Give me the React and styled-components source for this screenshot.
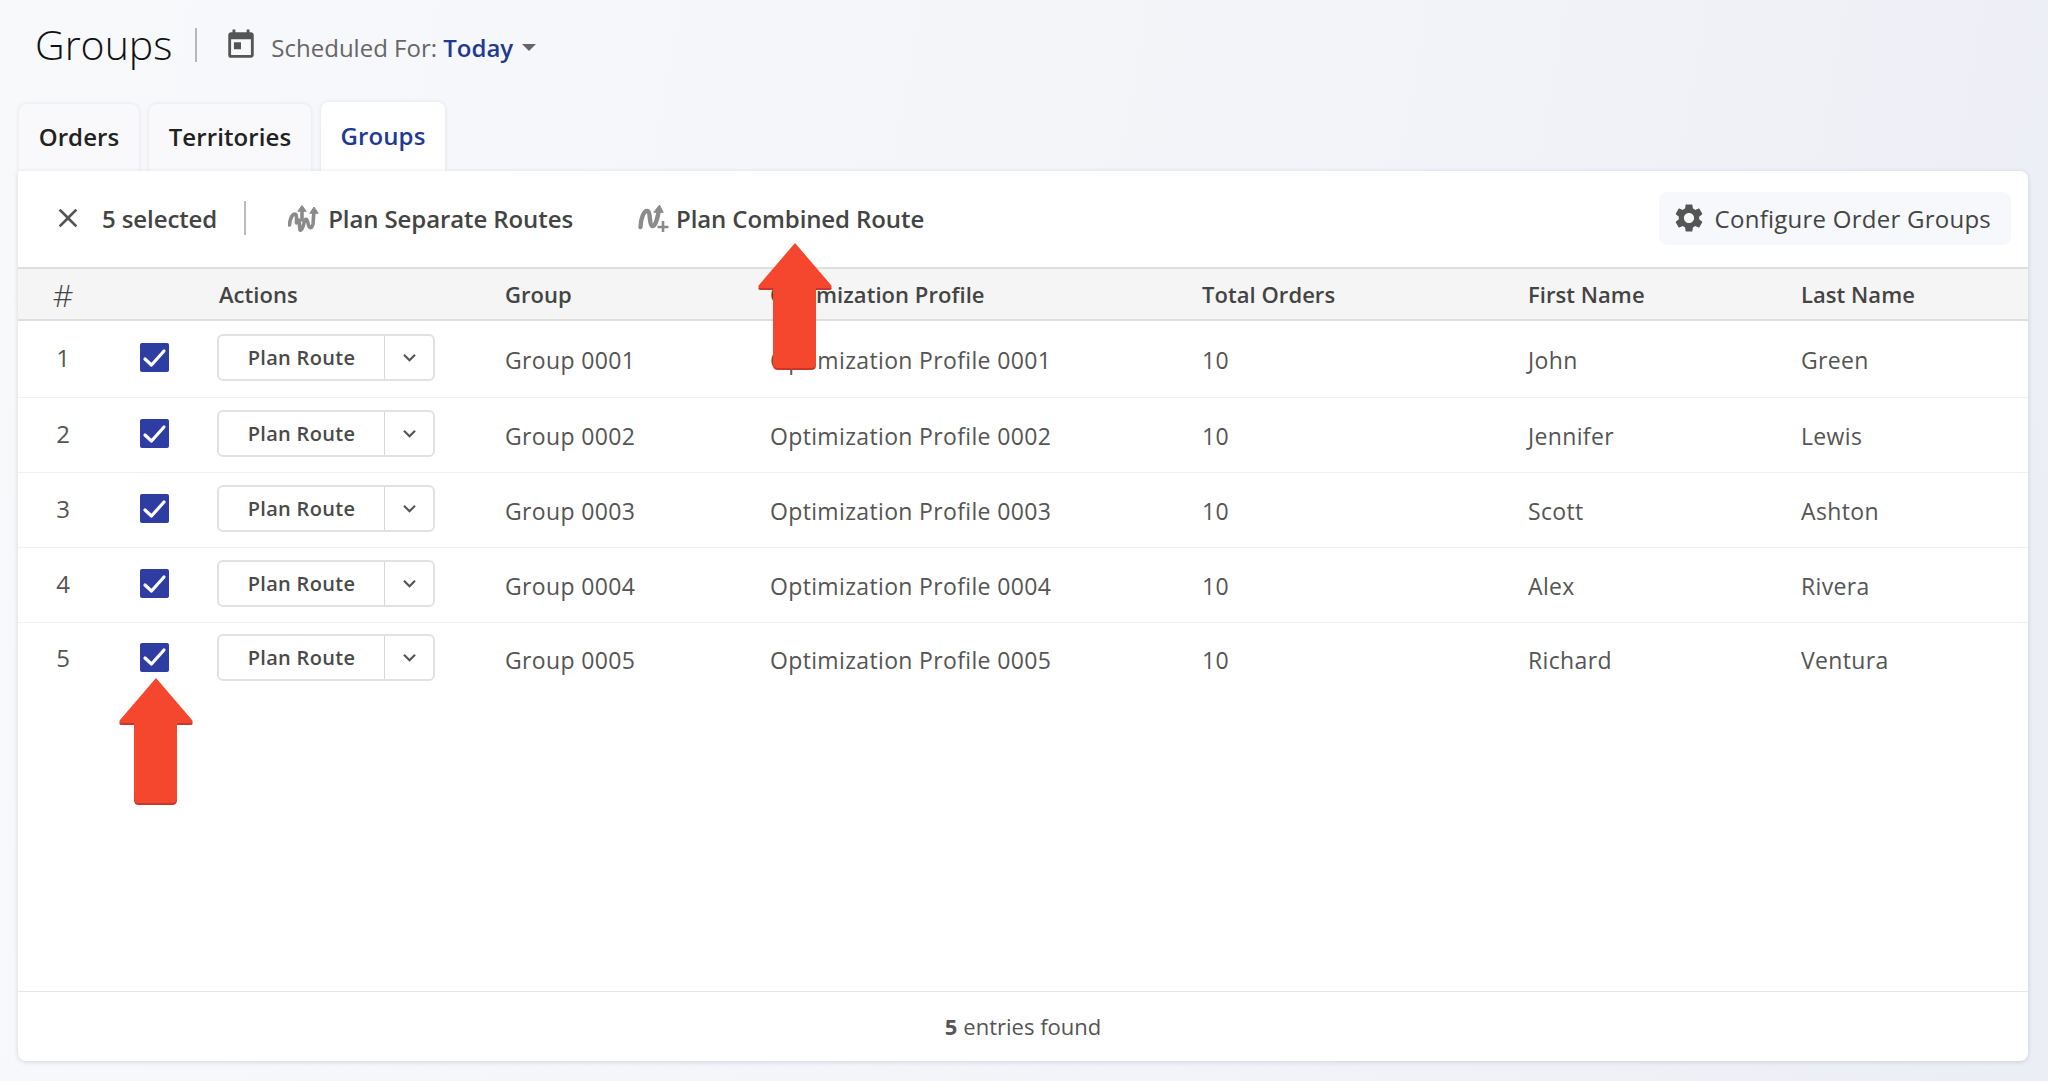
import React from "react";
import styled, { createGlobalStyle } from "styled-components";
import { MdToday, MdSettings, MdClose, MdExpandMore } from "react-icons/md";

const Global = createGlobalStyle`
  html, body {
    margin: 0;
    padding: 0;
    background: #f4f5f9;
  }
  * { box-sizing: border-box; }
`;

const Page = styled.div`
  position: relative;
  width: 2048px;
  height: 1081px;
  overflow: hidden;
  padding: 0 20px 20px 18px;
  font-family: "Open Sans", "Noto Sans", sans-serif;
  color: #555;
  background: linear-gradient(100deg, #f8f9fb 0%, #f4f5f9 50%, #eceef5 100%);
`;

const TitleBar = styled.div`
  display: flex;
  align-items: center;
  height: 90px;
  padding-left: 17px;
`;
const Title = styled.h1`
  margin: 0 0 3px;
  font-size: 41px;
  font-weight: 350;
  color: #111;
`;
const TitleDivider = styled.span`
  width: 2px;
  height: 34px;
  margin: 0 30px 0 23px;
  background: #b5b7bb;
`;
const CalendarIcon = styled(MdToday)`
  width: 34px;
  height: 34px;
  margin: 0 13px 0 -3px;
  color: #555;
`;
const Scheduled = styled.span`
  font-size: 24px;
  margin-top: 4px;
  color: #666;
`;
const Today = styled.span`
  color: #1f3a93;
  font-weight: 600;
`;
const Caret = styled.span`
  width: 0;
  height: 0;
  margin: 4px 0 0 9px;
  border-left: 7px solid transparent;
  border-right: 7px solid transparent;
  border-top: 7px solid #666;
`;

const Tabs = styled.div`
  display: flex;
  align-items: flex-end;
  gap: 10px;
  height: 81px;
  padding-left: 1px;
`;
const Tab = styled.div`
  display: flex;
  align-items: center;
  justify-content: center;
  width: ${(p) => p.$w}px;
  height: ${(p) => (p.$active ? 69 : 67)}px;
  padding-bottom: 2px;
  border-radius: 8px 8px 0 0;
  font-size: 24px;
  font-weight: 550;
  letter-spacing: 0.1px;
  color: ${(p) => (p.$active ? "#1f3a93" : "#222")};
  background: ${(p) => (p.$active ? "#fff" : "#f9f9fc")};
  box-shadow: 0 0 4px rgba(30, 40, 80, 0.1);
`;

const Card = styled.div`
  position: relative;
  height: 890px;
  display: flex;
  flex-direction: column;
  background: #fff;
  border-radius: 0 8px 8px 8px;
  box-shadow: 0 1px 5px rgba(30, 40, 80, 0.16);
`;

const Toolbar = styled.div`
  display: flex;
  align-items: center;
  height: 96px;
  padding: 0 17px 2px 40px;
  color: #444;
  font-size: 24px;
  font-weight: 550;
  letter-spacing: -0.1px;
`;
const CloseIcon = styled(MdClose)`
  width: 32px;
  height: 32px;
  margin: 0 18px 0 -6px;
  color: #555;
`;
const ToolDivider = styled.span`
  width: 2px;
  height: 34px;
  margin: 0 42px 0 27px;
  background: #bbb;
`;
const ToolAction = styled.div`
  display: flex;
  align-items: center;
  gap: ${(p) => p.$gap}px;
  margin-right: 65px;
  white-space: nowrap;
`;
const ConfigureButton = styled.div`
  display: flex;
  align-items: center;
  gap: 9px;
  height: 53px;
  margin-left: auto;
  padding: 0 20px 0 13px;
  border-radius: 8px;
  background: #f7f8fb;
  font-weight: 500;
  letter-spacing: 0.25px;
`;
const GearIcon = styled(MdSettings)`
  width: 34px;
  height: 34px;
  color: #555;
`;

const Grid = "90px 92px 305px 265px 432px 326px 273px 1fr";

const HeaderRow = styled.div`
  display: grid;
  grid-template-columns: ${Grid};
  align-items: center;
  height: 54px;
  border-top: 2px solid #dedede;
  border-bottom: 2px solid #dedede;
  background: #f5f5f5;
  color: #444;
`;
const HeadCell = styled.div`
  padding-left: ${(p) => p.$pad || 0}px;
  text-align: ${(p) => p.$align || "left"};
  font-size: ${(p) => p.$size || 22}px;
  font-weight: ${(p) => p.$weight || 550};
  letter-spacing: ${(p) => (p.$size ? 0 : "0.05px")};
`;

const Body = styled.div`
  flex: 1;
`;
const Row = styled.div`
  display: grid;
  grid-template-columns: ${Grid};
  align-items: center;
  height: ${(p) => p.$h}px;
  border-bottom: ${(p) => (p.$last ? "none" : "1px solid #f1f1f1")};
  font-size: 23px;
  color: #555;
`;
const Cell = styled.div`
  padding: 2px 0 0;
  letter-spacing: 0.35px;
  white-space: nowrap;
`;
const NumberCell = styled.div`
  margin-top: -3px;
  text-align: center;
  font-size: 24px;
`;
const CheckCell = styled.div`
  display: flex;
  justify-content: center;
  margin-top: -3px;
`;
const Checkbox = styled.span`
  display: flex;
  align-items: center;
  justify-content: center;
  width: 29px;
  height: 29px;
  border-radius: 2px;
  background: #2f3da3;
`;
const SplitButton = styled.div`
  display: flex;
  width: 218px;
  height: 47px;
  margin: -3px 0 0 17px;
  border: 2px solid #e2e2e2;
  border-radius: 6px;
  background: #fff;
`;
const SplitLabel = styled.div`
  display: flex;
  align-items: center;
  justify-content: center;
  flex: 1;
  font-size: 20px;
  font-weight: 600;
  letter-spacing: 0.3px;
  color: #4a4a4a;
`;
const SplitToggle = styled.div`
  display: flex;
  align-items: center;
  justify-content: center;
  width: 49px;
  border-left: 1px solid #d8d8d8;
  color: #555;
`;
const ChevronIcon = styled(MdExpandMore)`
  width: 25px;
  height: 25px;
`;

const Footer = styled.div`
  display: flex;
  align-items: center;
  justify-content: center;
  height: 70px;
  padding-bottom: 2px;
  border-top: 1px solid #e8e8e8;
  font-size: 22px;
  color: #555;
`;
const Strong = styled.b`
  font-weight: 700;
  margin-right: 6px;
`;

const ArrowSvg = styled.svg`
  position: absolute;
  left: ${(p) => p.$x}px;
  top: ${(p) => p.$y}px;
  width: 76px;
  height: 127px;
  overflow: visible;
`;

const SeparateIcon = () => (
  <svg width="32" height="28" viewBox="0 0 32 28" fill="none" stroke="#8b8b8b" strokeWidth="3.6" strokeLinecap="round" strokeLinejoin="round">
    <path d="M1.5 21 C2 13 5 10 7 10 C9 10 8.5 15 8.5 19" />
    <path d="M11 16 L12 26 C13 27 15 24 16 19 C17 14 19 14 20 19 C21 25 24 25 25 20 L26 7" />
    <path d="M14 16 V5" />
    <path d="M10 7 L14 1.5 L18 7 Z" fill="#8b8b8b" strokeWidth="1" />
    <path d="M22 9 L26 3 L30 9 Z" fill="#8b8b8b" strokeWidth="1" />
  </svg>
);

const CombinedIcon = () => (
  <svg width="32" height="30" viewBox="0 0 32 30" fill="none" stroke="#8b8b8b" strokeLinecap="round" strokeLinejoin="round">
    <path d="M2.5 24 C3 14 6 8 9 8 C13 8 11 22 14 23 C18 24 20 12 21 7" strokeWidth="4.4" />
    <path d="M16 9 L21.5 2 L25 9 Z" fill="#8b8b8b" strokeWidth="1" />
    <path d="M25 18 V29 M19.5 24 H30.5" strokeWidth="2.6" strokeLinecap="butt" />
  </svg>
);

const CheckMark = () => (
  <svg width="25" height="22" viewBox="0 0 25 22" fill="none" stroke="#fff" strokeWidth="3.2" strokeLinecap="round" strokeLinejoin="round">
    <path d="M3 12 L9.5 18 L22 4" />
  </svg>
);

const Arrow = ({ x, y }) => (
  <ArrowSvg $x={x} $y={y} viewBox="0 0 76 127">
    <path d="M38 2 L74 44 Q76 47 72 47 L59 47 L59 122 Q59 127 54 127 L21 127 Q16 127 16 122 L16 47 L4 47 Q0 47 2 44 Z" fill="#c9362a" />
    <path d="M38 0 L74 42 Q76 45 72 45 L59 45 L59 120 Q59 125 54 125 L21 125 Q16 125 16 120 L16 45 L4 45 Q0 45 2 42 Z" fill="#f5472d" />
  </ArrowSvg>
);

const rows = [
  { n: 1, h: 77, group: "Group 0001", profile: "Optimization Profile 0001", first: "John", last: "Green" },
  { n: 2, h: 75, group: "Group 0002", profile: "Optimization Profile 0002", first: "Jennifer", last: "Lewis" },
  { n: 3, h: 75, group: "Group 0003", profile: "Optimization Profile 0003", first: "Scott", last: "Ashton" },
  { n: 4, h: 75, group: "Group 0004", profile: "Optimization Profile 0004", first: "Alex", last: "Rivera" },
  { n: 5, h: 71, group: "Group 0005", profile: "Optimization Profile 0005", first: "Richard", last: "Ventura" },
];

export default function App() {
  return (
    <Page>
      <Global />
      <TitleBar>
        <Title>Groups</Title>
        <TitleDivider />
        <CalendarIcon />
        <Scheduled>
          Scheduled For: <Today>Today</Today>
        </Scheduled>
        <Caret />
      </TitleBar>
      <Tabs>
        <Tab $w={120}>Orders</Tab>
        <Tab $w={162}>Territories</Tab>
        <Tab $w={124} $active>
          Groups
        </Tab>
      </Tabs>
      <Card>
        <Toolbar>
          <CloseIcon />
          5 selected
          <ToolDivider />
          <ToolAction $gap={8}>
            <SeparateIcon />
            Plan Separate Routes
          </ToolAction>
          <ToolAction $gap={6}>
            <CombinedIcon />
            Plan Combined Route
          </ToolAction>
          <ConfigureButton>
            <GearIcon />
            Configure Order Groups
          </ConfigureButton>
        </Toolbar>
        <HeaderRow>
          <HeadCell $align="center" $size={32} $weight={300}>
            #
          </HeadCell>
          <HeadCell />
          <HeadCell $pad={19}>Actions</HeadCell>
          <HeadCell>Group</HeadCell>
          <HeadCell>Optimization Profile</HeadCell>
          <HeadCell>Total Orders</HeadCell>
          <HeadCell>First Name</HeadCell>
          <HeadCell>Last Name</HeadCell>
        </HeaderRow>
        <Body>
          {rows.map((r, i) => (
            <Row key={r.n} $h={r.h} $last={i === rows.length - 1}>
              <NumberCell>{r.n}</NumberCell>
              <CheckCell>
                <Checkbox>
                  <CheckMark />
                </Checkbox>
              </CheckCell>
              <SplitButton>
                <SplitLabel>Plan Route</SplitLabel>
                <SplitToggle>
                  <ChevronIcon />
                </SplitToggle>
              </SplitButton>
              <Cell>{r.group}</Cell>
              <Cell>{r.profile}</Cell>
              <Cell>10</Cell>
              <Cell>{r.first}</Cell>
              <Cell>{r.last}</Cell>
            </Row>
          ))}
        </Body>
        <Footer>
          <Strong>5</Strong> entries found
        </Footer>
      </Card>
      <Arrow x={757} y={243} />
      <Arrow x={118} y={678} />
    </Page>
  );
}
